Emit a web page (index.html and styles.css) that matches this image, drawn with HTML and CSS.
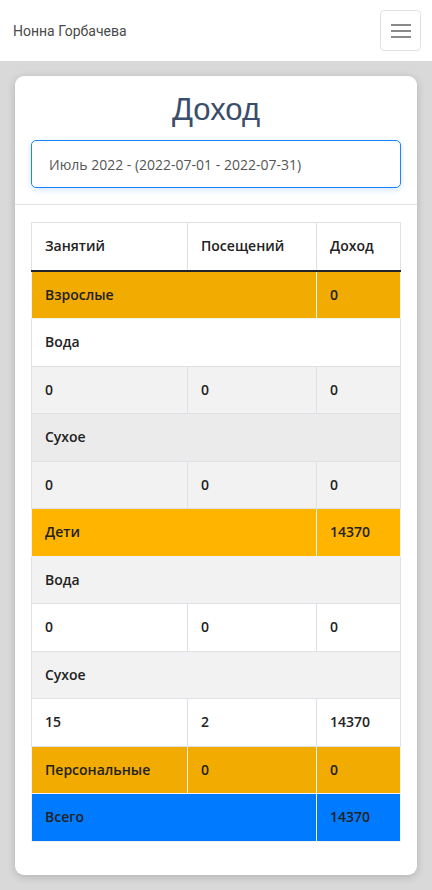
FILE: index.html
```html
<!DOCTYPE html>
<html lang="ru">
<head>
<meta charset="utf-8">
<meta name="viewport" content="width=device-width, initial-scale=1">
<title>Доход</title>
<link rel="stylesheet" href="styles.css">
</head>
<body>
<nav class="navbar">
  <a class="brand" href="#">Нонна Горбачева</a>
  <button class="toggler" type="button" aria-label="Меню">
    <svg width="20" height="14" viewBox="0 0 20 14"><path d="M0 1h20M0 7h20M0 13h20" stroke="#8a8a8a" stroke-width="2"/></svg>
  </button>
</nav>
<main class="page">
  <section class="card">
    <div class="card-head">
      <h1 class="title">Доход</h1>
      <div class="select">Июль 2022 - (2022-07-01 - 2022-07-31)</div>
    </div>
    <div class="card-body">
      <table class="report">
        <thead>
          <tr><th class="c1">Занятий</th><th class="c2">Посещений</th><th class="c3">Доход</th></tr>
        </thead>
        <tbody>
          <tr class="warn striped"><td colspan="2">Взрослые</td><td>0</td></tr>
          <tr><td colspan="3">Вода</td></tr>
          <tr class="striped"><td>0</td><td>0</td><td>0</td></tr>
          <tr class="hover"><td colspan="3">Сухое</td></tr>
          <tr class="striped"><td>0</td><td>0</td><td>0</td></tr>
          <tr class="warn"><td colspan="2">Дети</td><td>14370</td></tr>
          <tr class="striped"><td colspan="3">Вода</td></tr>
          <tr><td>0</td><td>0</td><td>0</td></tr>
          <tr class="striped"><td colspan="3">Сухое</td></tr>
          <tr><td>15</td><td>2</td><td>14370</td></tr>
          <tr class="warn striped"><td>Персональные</td><td>0</td><td>0</td></tr>
          <tr class="total"><td colspan="2">Всего</td><td>14370</td></tr>
        </tbody>
      </table>
    </div>
  </section>
</main>
</body>
</html>
```
FILE: styles.css
```css
* { box-sizing: border-box; }
html, body { margin: 0; padding: 0; }
body {
  background: #d9d9d9;
  font-family: "Open Sans", "Liberation Sans", sans-serif;
  color: #212529;
}
.navbar {
  height: 61px;
  background: #fff;
  display: flex;
  align-items: center;
  justify-content: space-between;
  padding: 0 11px 0 13px;
}
.brand {
  font-family: Roboto, "Liberation Sans", sans-serif;
  font-size: 14px;
  color: #4a4a4a;
  text-decoration: none;
}
.toggler {
  width: 41px;
  height: 41px;
  border: 1px solid #e2e2e2;
  border-radius: 4px;
  background: #fff;
  display: flex;
  align-items: center;
  justify-content: center;
  padding: 0;
}
.page { padding: 15px 15px 16px; }
.card {
  background: #fff;
  border-radius: 9px;
  box-shadow: 0 2px 8px rgba(0,0,0,0.18);
}
.card-head {
  padding: 14px 16px 16px;
  border-bottom: 1px solid #e3e3e3;
}
.title {
  margin: 0 0 10px;
  text-align: center;
  font-family: "Liberation Sans", Arial, sans-serif;
  font-weight: 400;
  font-size: 31px;
  line-height: 40px;
  color: #3a4e6b;
}
.select {
  height: 48px;
  border: 1px solid #1a85ff;
  border-radius: 5px;
  box-shadow: 0 2px 6px rgba(0,123,255,0.18);
  padding: 0 17px;
  display: flex;
  align-items: center;
  font-size: 14px;
  color: #555;
}
.card-body { padding: 17px 16px 33px; }
.report {
  width: 100%;
  border-collapse: collapse;
  font-size: 14px;
  font-weight: 600;
  color: #222;
}
.report th, .report td {
  border: 1px solid #dee2e6;
  padding: 12px 12px 12px 13px;
  line-height: 22.5px;
  text-align: left;
  font-weight: 600;
}
.report th { height: 48px; border-bottom: 2px solid #212529; }
.c1 { width: 156px; }
.c2 { width: 129px; }
.report tr.striped { background: #f2f2f2; }
.report tr.hover { background: #ebebeb; }
.report tr.warn { background: #ffb400; }
.report tr.warn.striped { background: #f2ab00; }
.report tr.warn td, .report tr.total td { border-color: #f3f3f3; }
.report tr.total { background: #007bff; }
```
